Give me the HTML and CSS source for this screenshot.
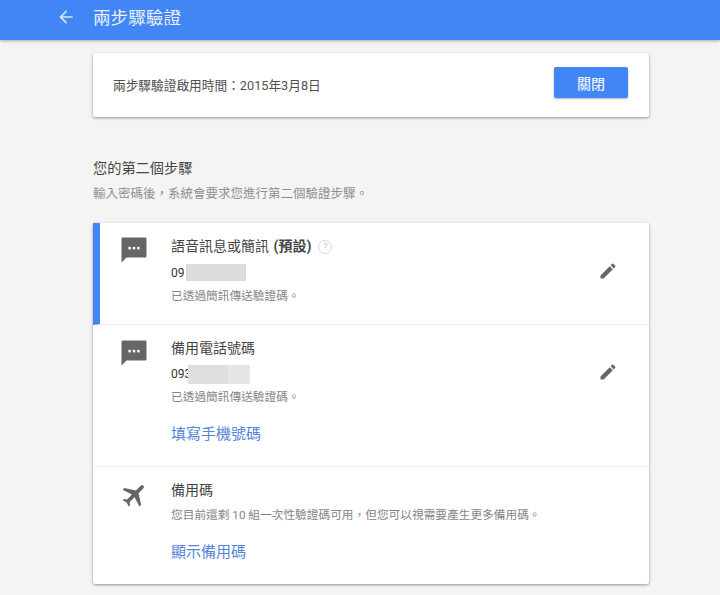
FILE: index.html
```html
<!DOCTYPE html>
<html lang="zh-Hant">
<head>
<meta charset="utf-8">
<title>兩步驟驗證</title>
<link rel="stylesheet" href="styles.css">
</head>
<body>
<header class="appbar">
  <svg class="back" viewBox="0 0 24 24" width="20" height="20"><path d="M20 11H7.830l5.590-5.590L12 4l-8 8 8 8 1.410-1.410L7.830 13H20z"/></svg>
  <h1 class="appbar-title">兩步驟驗證</h1>
</header>
<main class="content">
  <section class="card status">
    <p class="status-text">兩步驟驗證啟用時間：2015年3月8日</p>
    <button class="primary" type="button">關閉</button>
  </section>
  <h2 class="section-title">您的第二個步驟</h2>
  <p class="section-sub">輸入密碼後，系統會要求您進行第二個驗證步驟。</p>
  <section class="card methods">
    <div class="row row-default">
      <svg class="row-icon" viewBox="0 0 24 24" width="30" height="30"><path d="M3 2h18a1 1 0 0 1 1 1v14a1 1 0 0 1-1 1H6l-4 4V3a1 1 0 0 1 1-1z"/><g class="dots"><rect x="7.500" y="9.500" width="2" height="2"/><rect x="11" y="9.500" width="2" height="2"/><rect x="14.500" y="9.500" width="2" height="2"/></g></svg>
      <div class="row-body">
        <h3 class="row-title">語音訊息或簡訊 <b>(預設)</b><span class="help">?</span></h3>
        <div class="phone">09<span class="mask mask-a"></span></div>
        <p class="note">已透過簡訊傳送驗證碼。</p>
      </div>
      <svg class="edit" viewBox="0 0 24 24" width="20" height="20"><path d="M3 17.250V21h3.750L17.810 9.940l-3.750-3.750L3 17.250zM20.710 7.040a1 1 0 0 0 0-1.410l-2.340-2.340a1 1 0 0 0-1.410 0l-1.830 1.830 3.750 3.750 1.830-1.830z"/></svg>
    </div>
    <div class="row row-backup">
      <svg class="row-icon" viewBox="0 0 24 24" width="30" height="30"><path d="M3 2h18a1 1 0 0 1 1 1v14a1 1 0 0 1-1 1H6l-4 4V3a1 1 0 0 1 1-1z"/><g class="dots"><rect x="7.500" y="9.500" width="2" height="2"/><rect x="11" y="9.500" width="2" height="2"/><rect x="14.500" y="9.500" width="2" height="2"/></g></svg>
      <div class="row-body">
        <h3 class="row-title">備用電話號碼</h3>
        <div class="phone">093<span class="mask mask-b"></span></div>
        <p class="note">已透過簡訊傳送驗證碼。</p>
        <a class="link link-phone" href="#">填寫手機號碼</a>
      </div>
      <svg class="edit" viewBox="0 0 24 24" width="20" height="20"><path d="M3 17.250V21h3.750L17.810 9.940l-3.750-3.750L3 17.250zM20.710 7.040a1 1 0 0 0 0-1.410l-2.340-2.340a1 1 0 0 0-1.410 0l-1.830 1.830 3.750 3.750 1.830-1.830z"/></svg>
    </div>
    <div class="row row-codes">
      <svg class="row-icon plane" viewBox="0 0 24 24" width="30" height="30"><path d="M21 16v-2l-8-5V3.500a1.500 1.500 0 0 0-3 0V9l-8 5v2l8-2.500V19l-2 1.500V22l3.500-1 3.500 1v-1.500L13 19v-5.500z" transform="rotate(45 12 12)"/></svg>
      <div class="row-body">
        <h3 class="row-title">備用碼</h3>
        <p class="note note-codes">您目前還剩 10 組一次性驗證碼可用，但您可以視需要產生更多備用碼。</p>
        <a class="link" href="#">顯示備用碼</a>
      </div>
    </div>
  </section>
</main>
</body>
</html>
```
FILE: styles.css
```css
* { box-sizing: border-box; }
html, body { margin: 0; height: 595px; overflow: hidden; }
body {
  background: #f4f4f4;
  font-family: Roboto, "Noto Sans CJK TC", sans-serif;
  color: #333;
}
.appbar {
  height: 40px;
  background: #4285f4;
  box-shadow: 0 1px 3px rgba(0,0,0,.3);
  display: flex;
  align-items: center;
  padding-left: 56px;
  gap: 17px;
}
.back { fill: #d5e3fc; flex: none; margin-top: -6px; }
.appbar-title {
  margin: -8px 0 0;
  font-size: 17.6px;
  font-weight: 400;
  color: #e8f0fe;
}
.content { width: 556px; margin-left: 93px; padding-top: 13px; }
.card {
  background: #fff;
  box-shadow: 0 1px 3px rgba(0,0,0,.4);
  border-radius: 2px;
}
.status {
  height: 64px;
  display: flex;
  align-items: center;
  justify-content: space-between;
  padding: 0 21px 5px 20px;
}
.status-text { margin: 3px 0 0; font-size: 12.7px; color: #505050; }
.primary {
  width: 74px;
  height: 31px;
  border: 0;
  border-radius: 2px;
  background: #4285f4;
  box-shadow: 0 1px 2px rgba(0,0,0,.3);
  color: #e8f0fe;
  font: 500 14px Roboto, "Noto Sans CJK TC", sans-serif;
}
.section-title {
  margin: 41px 0 0;
  font-size: 14.200px;
  line-height: 20px;
  font-weight: 400;
  color: #444;
}
.section-sub {
  margin: 7px 0 0;
  font-size: 12.500px;
  line-height: 18px;
  color: #909090;
}
.methods { margin-top: 20px; height: 361px; }
.row {
  display: flex;
  align-items: flex-start;
  position: relative;
  padding-left: 78px;
}
.row-default { height: 102px; padding-top: 13px; border-left: 7px solid #4285f4; padding-left: 71px; border-bottom: 1px solid #eee; }
.row-backup { height: 142px; padding-top: 13px; border-bottom: 1px solid #eee; margin-left: 2px; padding-left: 76px; }
.row-codes { padding-top: 13px; }
.row-icon { position: absolute; fill: #666; }
.row-default .row-icon { left: 19px; top: 12px; }
.row-backup .row-icon { left: 24px; top: 13px; }
.row-codes .row-icon { left: 27px; top: 13px; }
.dots { fill: #fff; }
.row-body { flex: 1; }
.row-title {
  margin: 0;
  font-size: 14px;
  line-height: 20px;
  font-weight: 400;
  color: #444;
}
.row-title b { font-weight: 700; margin-left: 1px; }
.help {
  display: inline-flex;
  align-items: center;
  justify-content: center;
  width: 14px;
  height: 14px;
  margin-left: 7px;
  border: 1px solid #d8d8d8;
  border-radius: 50%;
  color: #c4c4c4;
  font-size: 9px;
  vertical-align: 1px;
}
.phone {
  display: flex;
  margin-top: 7px;
  height: 19px;
  font-size: 12px;
  line-height: 19px;
  color: #333;
}
.row-default .phone { margin-top: 8px; }
.mask { display: block; height: 19px; background: #dcdcdc; }
.mask-a { width: 60px; margin-left: 1px; height: 17px; }
.mask-b { width: 62px; margin-left: -3px; background: linear-gradient(to right, #dedede 0 40px, #e6e6e6 40px); }
.note {
  margin: 5px 0 0;
  font-size: 11.700px;
  line-height: 17px;
  color: #858585;
}
.note-codes { margin-top: 7px; }
.link {
  display: block;
  margin-top: 18px;
  font-size: 15px;
  line-height: 20px;
  color: #5585d8;
  text-decoration: none;
}
.edit { position: absolute; right: 31px; top: 37px; fill: #666; }
.row-default .edit { top: 38px; }
```
